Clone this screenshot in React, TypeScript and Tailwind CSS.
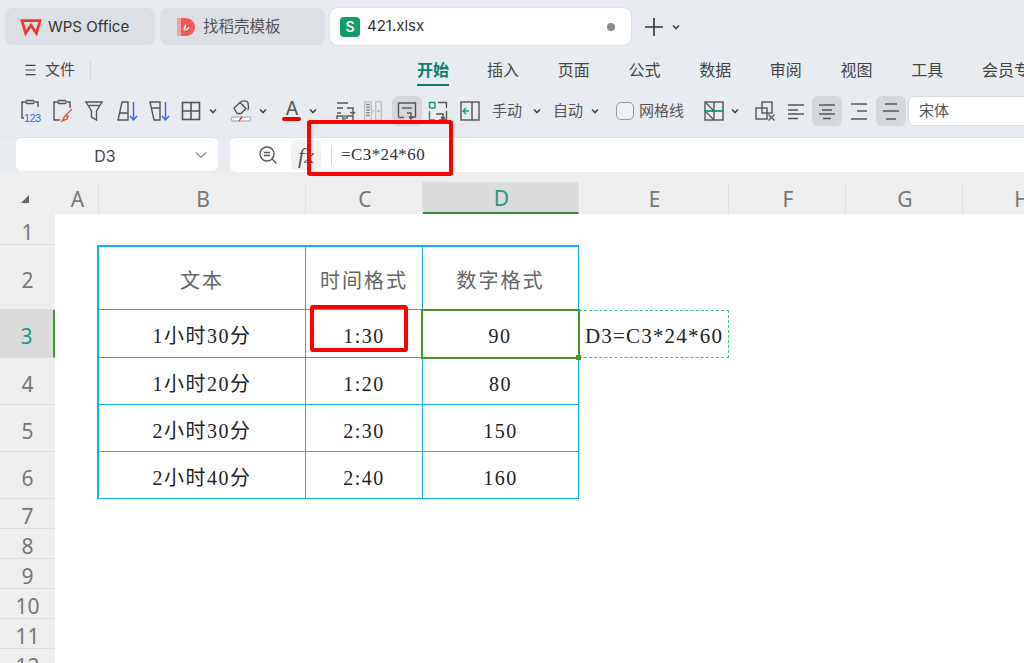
import React from 'react';

const UI_FONT = 'font-["Inter","Noto_Sans_CJK_SC",sans-serif]';
const CELL_FONT = 'font-["Liberation_Serif","Noto_Sans_CJK_SC",serif]';

const Chevron: React.FC<{ className?: string }> = ({ className = 'w-[10px]' }) => (
  <svg viewBox="0 0 10 10" className={`h-[10px] ${className}`} fill="none" stroke="#444" strokeWidth="1.6">
    <path d="M2 3.5 L5 6.5 L8 3.5" />
  </svg>
);

const Icon: React.FC<{ children: React.ReactNode }> = ({ children }) => (
  <svg viewBox="0 0 24 24" className="w-[24px] h-[24px]" fill="none" stroke="#555" strokeWidth="1.4">
    {children}
  </svg>
);

const Slot: React.FC<{ w: string; active?: boolean; children: React.ReactNode }> = ({ w, active, children }) => (
  <div className={`${w} h-[30px] shrink-0 flex items-center justify-center rounded-md ${active ? 'bg-[#d4d8dc]' : ''}`}>
    {children}
  </div>
);

const Tab: React.FC<{ w: string; children: React.ReactNode }> = ({ w, children }) => (
  <div className={`${w} h-[37px] shrink-0 rounded-lg bg-[#dce0e5] flex items-center`}>{children}</div>
);

const menus = ['插入', '页面', '公式', '数据', '审阅', '视图', '工具', '会员专享'];

const Toolbar = () => (
  <div className="h-[30px] mt-[11px] flex items-center pl-[13px]">
    <Slot w="w-[33px]">
      <Icon>
        <path d="M7 3H4v16h2M17 3h3v5" />
        <rect x="8" y="1.5" width="8" height="3" rx="1" />
        <text x="6" y="23" fontSize="11" fill="#2f6fe0" stroke="none" fontFamily="Liberation Sans" textLength="17">123</text>
      </Icon>
    </Slot>
    <Slot w="w-[32px]">
      <Icon>
        <path d="M7 3H4v18h6M17 3h3v6" />
        <rect x="8" y="1.5" width="8" height="3" rx="1" />
        <path d="M22 10 L15 17 M15 17 L12 22 L17 20 L18 17 Z" stroke="#d2622a" />
      </Icon>
    </Slot>
    <Slot w="w-[32px]">
      <Icon>
        <path d="M4 3H20L14.5 12V21L9.5 18V12Z" />
        <path d="M7 6.5H17" />
      </Icon>
    </Slot>
    <Slot w="w-[33px]">
      <Icon>
        <path d="M7 3H13V21H3Z M5 14H13" />
        <path d="M18.5 3V21M15 17L18.5 21L22 17" stroke="#2f6fe0" />
      </Icon>
    </Slot>
    <Slot w="w-[32px]">
      <Icon>
        <path d="M3 3H13V21H7Z M4.5 9H13" />
        <path d="M18.5 3V21M15 17L18.5 21L22 17" stroke="#2f6fe0" />
      </Icon>
    </Slot>
    <Slot w="w-[31px]">
      <Icon>
        <rect x="3.5" y="3.5" width="17" height="17" strokeWidth="1.6" />
        <path d="M12 3.5V20.5M3.5 12H20.5" strokeWidth="1.6" />
      </Icon>
    </Slot>
    <Slot w="w-[14px]"><Chevron /></Slot>
    <Slot w="w-[28px] ml-[7px]">
      <Icon>
        <path d="M5 9L11 3.5L17 9.5L12 14.5H8Z" />
        <path d="M11 3.5C13 1.5 18 1 19 4C19.5 6 20 9 19 11" />
        <rect x="2.5" y="18" width="19" height="4" rx="1" stroke="#bbb" fill="#fff" />
        <path d="M10 22L13 18" stroke="#d9433a" />
      </Icon>
    </Slot>
    <Slot w="w-[15px]"><Chevron /></Slot>
    <Slot w="w-[32px] ml-[6px]">
      <div className="relative w-[20px] h-[22px] mb-[2px] flex justify-center">
        <span className={`${UI_FONT} text-[19px] leading-[20px] text-[#555]`}>A</span>
        <span className="absolute left-0 bottom-0 w-[19px] h-[4px] rounded-sm bg-[#ee0000]" />
      </div>
    </Slot>
    <Slot w="w-[10px]"><Chevron /></Slot>
    <Slot w="w-[31px] ml-[11px]">
      <Icon>
        <path d="M4 4H15M4 9H10M4 14H8" />
        <path d="M14 9H20V15L17 13M20 15L22 13" />
        <path d="M4 20V17H10V23H4M14 20V17H20V23" />
        <path d="M12 16V22" stroke="#0f9d68" />
      </Icon>
    </Slot>
    <Slot w="w-[26px]">
      <svg viewBox="0 0 24 24" className="w-[22px] h-[24px]" fill="none" stroke="#aaa" strokeWidth="1">
        <rect x="3" y="2" width="7" height="20" fill="#eee" />
        <path d="M4.5 5H8.5M4.5 8H8.5M4.5 11H8.5M4.5 14H8.5M4.5 17H8.5" stroke="#888" strokeWidth="1.6" />
        <path d="M11 10L13 12L11 14" />
        <rect x="15" y="2" width="6" height="20" />
        <path d="M17 12H19" stroke="#3cc48c" strokeWidth="1.5" />
      </svg>
    </Slot>
    <Slot w="w-[30px] ml-[6px]" active>
      <Icon>
        <path d="M3.5 18V4H20.5V18H17" />
        <path d="M7 9H17" />
        <path d="M12 14H16V19M14 17.5L16 20L18 17.5" />
        <path d="M3.5 18.5H9" />
      </Icon>
    </Slot>
    <Slot w="w-[31px]">
      <Icon>
        <path d="M3.5 9V3.5H9M3.5 12V21H9" stroke="#0f9d68" />
        <path d="M12 3.5H20.5V9M20.5 12V21H13" />
        <path d="M3.5 9H9V3.5" stroke="#0f9d68" />
        <path d="M10 15H17V20M15 18L17 20.5L19 18" />
      </Icon>
    </Slot>
    <Slot w="w-[33px]">
      <Icon>
        <rect x="3" y="3" width="18" height="18" />
        <path d="M14 3V21" />
        <path d="M11 12H5M8 9L5 12L8 15" stroke="#0f9d68" />
      </Icon>
    </Slot>
    <div className={`${UI_FONT} ml-[6px] w-[34px] text-[15px] text-[#555] shrink-0 whitespace-nowrap`}>手动</div>
    <div className="w-[22px] flex justify-center shrink-0"><Chevron /></div>
    <div className={`${UI_FONT} ml-[5px] w-[31px] text-[15px] text-[#555] shrink-0 whitespace-nowrap`}>自动</div>
    <div className="w-[22px] flex justify-center shrink-0"><Chevron /></div>
    <div className="ml-[10px] w-[18px] h-[18px] rounded-[5px] border border-[#999] bg-[#eef0f3] shrink-0" />
    <div className={`${UI_FONT} ml-[5px] w-[44px] text-[15px] text-[#555] shrink-0 whitespace-nowrap`}>网格线</div>
    <Slot w="w-[32px] ml-[15px]">
      <Icon>
        <rect x="3" y="3" width="18" height="18" />
        <path d="M12 3V21M3 3L12 12M3 12L12 21" />
        <path d="M2 12H22" stroke="#0f9d68" strokeWidth="1.8" />
      </Icon>
    </Slot>
    <Slot w="w-[10px]"><Chevron /></Slot>
    <Slot w="w-[30px] ml-[10px]">
      <Icon>
        <rect x="3" y="9" width="11" height="11" />
        <rect x="9" y="3" width="10" height="11" />
        <path d="M15.5 15.5L21.5 21.5M21.5 15.5L15.5 21.5" />
      </Icon>
    </Slot>
    <Slot w="w-[32px]">
      <Icon>
        <path d="M4 6H20M4 11H14M4 15H20M4 19.5H14" />
      </Icon>
    </Slot>
    <Slot w="w-[30px]" active>
      <Icon>
        <path d="M4 6H20M7 11H17M4 15H20M8 19.5H16" />
      </Icon>
    </Slot>
    <Slot w="w-[34px]">
      <Icon>
        <path d="M4 5H20M10 12H20M4 20H20" />
      </Icon>
    </Slot>
    <Slot w="w-[30px]" active>
      <Icon>
        <path d="M6 5H18M4 12H20M7 20H17" />
      </Icon>
    </Slot>
    <div className={`${UI_FONT} ml-[2px] w-[140px] h-[30px] shrink-0 rounded-l-md bg-white border border-[#d5d8dc] flex items-center pl-[10px] text-[15px] text-[#555]`}>
      宋体
    </div>
  </div>
);

const FormulaBar = () => (
  <div className="mt-[11px] h-[35px] flex pl-[16px] gap-[12px] border-t border-[#dfe2e6]">
    <div className="w-[202px] h-[33px] rounded-md bg-white flex items-center relative">
      <span className={`${UI_FONT} w-[178px] text-center text-[16px] text-[#444] pt-[2px]`}>D3</span>
      <svg viewBox="0 0 14 14" className="w-[14px] h-[14px]" fill="none" stroke="#888" strokeWidth="1.2">
        <path d="M2 4.5L7 9.5L12 4.5" />
      </svg>
    </div>
    <div className="flex-1 h-[34px] rounded-l-md bg-white flex items-center">
      <svg viewBox="0 0 20 20" className="w-[20px] h-[20px] ml-[28px]" fill="none" stroke="#555" strokeWidth="1.4">
        <circle cx="9" cy="9" r="7" />
        <path d="M6 7.5H12M6 10.5H12M14 14L18.5 18.5" />
      </svg>
      <div className="ml-[13px] w-[30px] h-[30px] rounded-md bg-[#f2f2f2] flex items-center justify-center">
        <span className="font-['Liberation_Serif',serif] italic text-[22px] text-[#555]">fx</span>
      </div>
      <div className="ml-[10px] w-px h-[20px] bg-[#d8d8d8]" />
      <span className="ml-[9px] font-['Liberation_Serif',serif] text-[17px] tracking-[0.4px] text-[#333]">=C3*24*60</span>
    </div>
  </div>
);

const columns = ['A', 'B', 'C', 'D', 'E', 'F', 'G', 'H'];
const rowHeights = [
  'h-[31px]', 'h-[65px]', 'h-[48px]', 'h-[47px]', 'h-[47px]', 'h-[47px]',
  'h-[30px]', 'h-[30px]', 'h-[30px]', 'h-[30px]', 'h-[30px]', 'h-[30px]',
];

const Mixed: React.FC<{ a: string; b: string }> = ({ a, b }) => (
  <>
    <span className="tracking-[1.5px]">{a}</span>小时<span className="tracking-[1.5px]">{b}</span>分
  </>
);

const tableRows: { b: React.ReactNode; c: string; d: string }[] = [
  { b: <Mixed a="1" b="30" />, c: '1:30', d: '90' },
  { b: <Mixed a="1" b="20" />, c: '1:20', d: '80' },
  { b: <Mixed a="2" b="30" />, c: '2:30', d: '150' },
  { b: <Mixed a="2" b="40" />, c: '2:40', d: '160' },
];

const headCell = `${CELL_FONT} pt-[5px] border-r-[1.5px] border-b-[1.5px] border-[#14b0f0] flex items-center justify-center text-[20px] tracking-[2px] text-[#666]`;
const bodyCell = `${CELL_FONT} pt-[5px] border-r-[1.5px] border-b-[1.5px] border-[#14b0f0] flex items-center justify-center text-[20px] tracking-[1.5px] text-[#222]`;

const Sheet = () => (
  <div className="grid grid-cols-[55px_44px_207px_117px_156px_150px_117px_117px_117px] auto-rows-min">
    <div className="h-[42px] pt-[10px] flex items-start justify-center">
      <svg viewBox="0 0 12 12" className="w-[12px] h-[12px] mt-[11px] mr-[5px]"><path d="M10 2V10H2Z" fill="#666" /></svg>
    </div>
    {columns.map((c) => (
      <div key={c} className="h-[42px] pt-[10px]">
        <div
          className={`h-[32px] pt-[3px] pl-[2px] flex items-center justify-center font-["Noto_Sans",sans-serif] text-[21px] border-r border-[#e0e0e0] ${
            c === 'D' ? 'bg-[#dbdbdb] text-[#1a9a85] border-b-2 border-b-[#2e8b3a]' : 'text-[#777]'
          }`}
        >
          {c}
        </div>
      </div>
    ))}

    {rowHeights.map((h, i) => {
      const n = i + 1;
      const row = n >= 3 && n <= 6 ? tableRows[n - 3] : null;
      return (
        <React.Fragment key={n}>
          <div
            className={`${h} pt-[6px] flex items-center justify-center font-["Noto_Sans",sans-serif] text-[21px] leading-none border-b border-[#dcdcdc] ${
              n === 3 ? 'bg-[#dbdbdb] text-[#1a9a85] border-r-2 border-r-[#3f9a35]' : 'text-[#777]'
            }`}
          >
            {n}
          </div>
          <div className={`${h} bg-white`} />
          {n === 2 && (
            <>
              <div className={`${headCell} bg-white border-t-2 border-l-2 -ml-[2px]`}>文本</div>
              <div className={`${headCell} bg-white border-t-2`}>时间格式</div>
              <div className={`${headCell} bg-white border-t-2`}>数字格式</div>
            </>
          )}
          {row && (
            <>
              <div className={`${bodyCell} bg-white border-l-2 -ml-[2px] ${n === 6 ? 'border-b-2' : ''}`}>{row.b}</div>
              <div className={`${bodyCell} bg-white ${n === 6 ? 'border-b-2' : ''}`}>{row.c}</div>
              {n === 3 ? (
                <div className={`${bodyCell} bg-white relative outline-2 outline-[#4b9322] -outline-offset-1 -ml-px`}>
                  {row.d}
                  <span className="absolute -right-[3px] -bottom-[3px] w-[5px] h-[5px] bg-[#4b9322]" />
                </div>
              ) : (
                <div className={`${bodyCell} bg-white ${n === 6 ? 'border-b-2' : ''}`}>{row.d}</div>
              )}
            </>
          )}
          {n !== 2 && !row && (
            <>
              <div className={`${h} bg-white`} />
              <div className={`${h} bg-white`} />
              <div className={`${h} bg-white`} />
            </>
          )}
          {n === 3 ? (
            <div className={`${CELL_FONT} ${h} pt-[5px] bg-white border border-dashed border-[#3cc48c] flex items-center justify-center text-[21px] tracking-[1.2px] text-[#222] whitespace-nowrap`}>
              D3=C3*24*60
            </div>
          ) : (
            <div className={`${h} bg-white`} />
          )}
          <div className={`${h} bg-white`} />
          <div className={`${h} bg-white`} />
          <div className={`${h} bg-white`} />
        </React.Fragment>
      );
    })}
  </div>
);

export default function App() {
  return (
    <div className={`${UI_FONT} relative w-[1024px] h-[663px] overflow-hidden bg-[#e8ecf1]`}>
      <div className="pt-[8px] pl-[5px] flex items-center gap-[5px]">
        <Tab w="w-[150px]">
          <svg viewBox="0 0 24 20" className="w-[22px] h-[18px] ml-[15px]" fill="none" stroke="#ee3a2c" strokeWidth="3">
            <path d="M2 3H22L18 17L12 8L6 17Z" strokeLinejoin="miter" />
          </svg>
          <span className="ml-[6px] pt-[1px] text-[15px] text-[#333] whitespace-nowrap">WPS Office</span>
        </Tab>
        <Tab w="w-[165px]">
          <svg viewBox="0 0 20 20" className="w-[20px] h-[20px] ml-[16px]">
            <path d="M1 1H9C15 1 19 5 19 10C19 15 15 19 9 19H1Z" fill="#ee5a5c" />
            <path d="M1 1H5V19H1Z" fill="#f6a0a0" />
            <path d="M8 14C7 11 8 9 10 7C10 10 10 12 8 14ZM9 14C11 13 13 12 14 10C11 10.500 10 12 9 14Z" fill="#fff" />
          </svg>
          <span className="ml-[7px] text-[15.500px] text-[#555] whitespace-nowrap">找稻壳模板</span>
        </Tab>
        <div className="w-[301px] h-[37px] shrink-0 rounded-lg bg-white shadow-[0_0_2px_rgba(0,0,0,0.15)] flex items-center">
          <div className="ml-[10px] w-[20px] h-[20px] rounded-[4px] bg-[#0f9d68] flex items-center justify-center text-white text-[14px] font-semibold">S</div>
          <span className="ml-[7px] text-[15px] text-[#333]">421.xlsx</span>
          <span className="ml-auto mr-[16px] w-[8px] h-[8px] rounded-full bg-[#8c8c8c]" />
        </div>
        <svg viewBox="0 0 20 20" className="w-[20px] h-[20px] ml-[8px]" fill="none" stroke="#333" strokeWidth="1.6">
          <path d="M10 1V19M1 10H19" />
        </svg>
        <Chevron className="w-[10px] ml-[2px]" />
      </div>

      <div className="mt-[10px] h-[30px] flex items-center relative">
        <svg viewBox="0 0 12 12" className="ml-[25px] w-[11px] h-[12px] shrink-0" fill="none" stroke="#444" strokeWidth="1.2">
          <path d="M0.5 1H11.500M0.500 6H11.500M0.500 11H11.500" />
        </svg>
        <span className="ml-[9px] text-[15px] text-[#444] whitespace-nowrap shrink-0">文件</span>
        <div className="ml-[15px] w-px h-[20px] bg-[#d4d7db] shrink-0" />
        <div className="ml-[326px] w-[32px] h-[30px] shrink-0 relative flex items-center justify-center text-[16px] font-bold text-[#0b7f6a] whitespace-nowrap">
          开始
          <span className="absolute left-0 right-0 -bottom-px h-[2px] bg-[#0b7f6a]" />
        </div>
        <div className="ml-[38px] flex gap-[38.700px] text-[16px] text-[#444] whitespace-nowrap">
          {menus.map((m) => (
            <span key={m}>{m}</span>
          ))}
        </div>
      </div>

      <Toolbar />
      <FormulaBar />
      <div className="bg-[#eeeeee]">
        <Sheet />
      </div>

      {/* red callouts sit on top of the screenshot */}
      <div className="absolute left-[307px] top-[120px] w-[146px] h-[56px] border-[4px] border-[#ff0000] rounded-[3px]" />
      <div className="absolute left-[310px] top-[305px] w-[98px] h-[47px] border-[4px] border-[#ff0000] rounded-[3px]" />
    </div>
  );
}
